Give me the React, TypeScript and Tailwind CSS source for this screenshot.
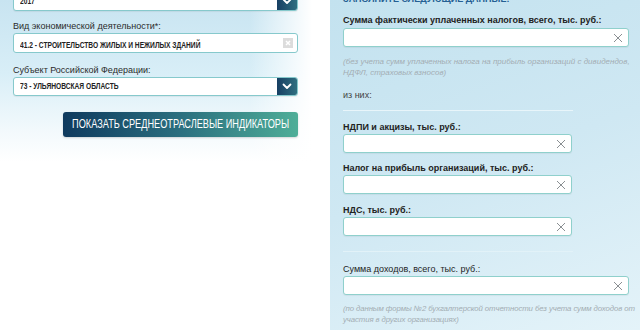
import React from "react";

const F = { fontFamily: '"Liberation Sans", Arial, sans-serif' };

function Chevron() {
  return (
    <svg width="10" height="7" viewBox="0 0 10 7">
      <path d="M1.5 1.5 L5 5 L8.5 1.5" fill="none" stroke="#fff" strokeWidth="1.8" strokeLinecap="round" strokeLinejoin="round" />
    </svg>
  );
}

function XIcon() {
  return (
    <svg width="10" height="10" viewBox="0 0 10 10">
      <path d="M1 1 L9 9 M9 1 L1 9" stroke="#8a8f92" strokeWidth="1" fill="none" />
    </svg>
  );
}

function SelectBox({ value, className }: { value: string; className: string }) {
  return (
    <div className={`flex h-[19px] rounded-[3px] border border-[#86c9cc] bg-white overflow-hidden shadow-[0_1px_1px_rgba(0,0,0,0.06)] ${className}`}>
      <div className="flex-1 flex items-center pl-[6px] overflow-hidden">
        <span className="inline-block origin-left scale-x-[0.7] whitespace-nowrap text-[9.5px] font-bold text-[#222]">{value}</span>
      </div>
      <div className="w-[20px] flex items-center justify-center bg-[linear-gradient(90deg,#173f63,#2f6f80)]">
        <Chevron />
      </div>
    </div>
  );
}

function Field({ w, className }: { w: string; className: string }) {
  return (
    <div className={`flex items-center justify-end pr-[5px] h-[19px] rounded-[3px] border border-[#8fd0cc] bg-white shadow-[0_1px_1px_rgba(0,0,0,0.05)] ${w} ${className}`}>
      <XIcon />
    </div>
  );
}

export default function App() {
  return (
    <div className="w-[640px] h-[330px] bg-white overflow-hidden flex items-start" style={F}>
      {/* Left panel */}
      <div className="w-[312px] h-[162px] flex flex-col pl-[13px] pr-[14px] bg-[linear-gradient(90deg,rgba(255,255,255,0)_80%,#ffffff_100%),linear-gradient(180deg,#c8e4f1_0%,#d8eef7_45%,#f2f9fc_80%,#ffffff_100%)]">
        <SelectBox value="2017" className="mt-[-8px]" />
        <div className="mt-[9px] h-[12px] leading-[12px] text-[9px] text-[#2b2b2b]">Вид экономической деятельности*:</div>
        <div className="mt-[1px] flex items-center h-[20px] rounded-[3px] border border-[#86c9cc] bg-white pl-[6px] pr-[4px]">
          <div className="flex-1 overflow-hidden">
            <span className="inline-block origin-left scale-x-[0.7] whitespace-nowrap text-[9.5px] font-bold text-[#222]">41.2 - СТРОИТЕЛЬСТВО ЖИЛЫХ И НЕЖИЛЫХ ЗДАНИЙ</span>
          </div>
          <div className="w-[10px] h-[10px] bg-[#dcdcdc] flex items-center justify-center">
            <svg width="6" height="6" viewBox="0 0 6 6">
              <path d="M1 1 L5 5 M5 1 L1 5" stroke="#fff" strokeWidth="1.5" />
            </svg>
          </div>
        </div>
        <div className="mt-[11px] h-[12px] leading-[12px] text-[9px] text-[#2b2b2b]">Субъект Российской Федерации:</div>
        <SelectBox value="73 - УЛЬЯНОВСКАЯ ОБЛАСТЬ" className="mt-[1px]" />
        <div className="mt-[16px] self-end w-[235px] h-[25px] rounded-[3px] flex items-center justify-center bg-[linear-gradient(90deg,#0f3a5e,#2b6f7f_50%,#4fae98)] shadow-[0_1px_2px_rgba(0,0,0,0.15)]">
          <span className="inline-block scale-x-[0.68] whitespace-nowrap text-[13.5px] text-white">ПОКАЗАТЬ СРЕДНЕОТРАСЛЕВЫЕ ИНДИКАТОРЫ</span>
        </div>
      </div>

      {/* Right panel */}
      <div className="ml-[18px] w-[310px] h-[330px] flex flex-col pl-[13px] pr-[11px] bg-[linear-gradient(160deg,#c3e2ef_0%,#cfe8f3_50%,#e4f3f9_100%)]">
        <div className="mt-[-7px] h-[12px] leading-[12px] text-[9px] font-bold text-[#245f93]">ЗАПОЛНИТЕ СЛЕДУЮЩИЕ ДАННЫЕ:</div>
        <div className="mt-[9px] h-[12px] leading-[12px] text-[9px] font-bold text-[#222]">Сумма фактически уплаченных налогов, всего, тыс. руб.:</div>
        <Field w="w-[286px]" className="mt-[2px]" />
        <div className="mt-[9px] w-[292px] leading-[11px] text-[8px] italic text-[#a3adb3]">(без учета сумм уплаченных налога на прибыль организаций с дивидендов, НДФЛ, страховых взносов)</div>
        <div className="mt-[11px] h-[12px] leading-[12px] text-[9px] text-[#444]">из них:</div>
        <div className="mt-[9px] h-px w-[230px] bg-[#e8f5fa]" />
        <div className="mt-[10px] h-[12px] leading-[12px] text-[9px] font-bold text-[#222]">НДПИ и акцизы, тыс. руб.:</div>
        <Field w="w-[229px]" className="mt-[1px]" />
        <div className="mt-[9px] h-[12px] leading-[12px] text-[9px] font-bold text-[#222]">Налог на прибыль организаций, тыс. руб.:</div>
        <Field w="w-[229px]" className="mt-[1px]" />
        <div className="mt-[10px] h-[12px] leading-[12px] text-[9px] font-bold text-[#222]">НДС, тыс. руб.:</div>
        <Field w="w-[229px]" className="mt-[1px]" />
        <div className="mt-[15px] h-px w-[230px] bg-[#e2f2f8]" />
        <div className="mt-[11px] h-[12px] leading-[12px] text-[9px] text-[#1e1e1e]">Сумма доходов, всего, тыс. руб.:</div>
        <Field w="w-[286px]" className="mt-[1px]" />
        <div className="mt-[8px] w-[296px] leading-[11px] text-[7.8px] tracking-[-0.1px] italic text-[#a3adb3]">(по данным формы №2 бухгалтерской отчетности без учета сумм доходов от участия в других организациях)</div>
      </div>
    </div>
  );
}
